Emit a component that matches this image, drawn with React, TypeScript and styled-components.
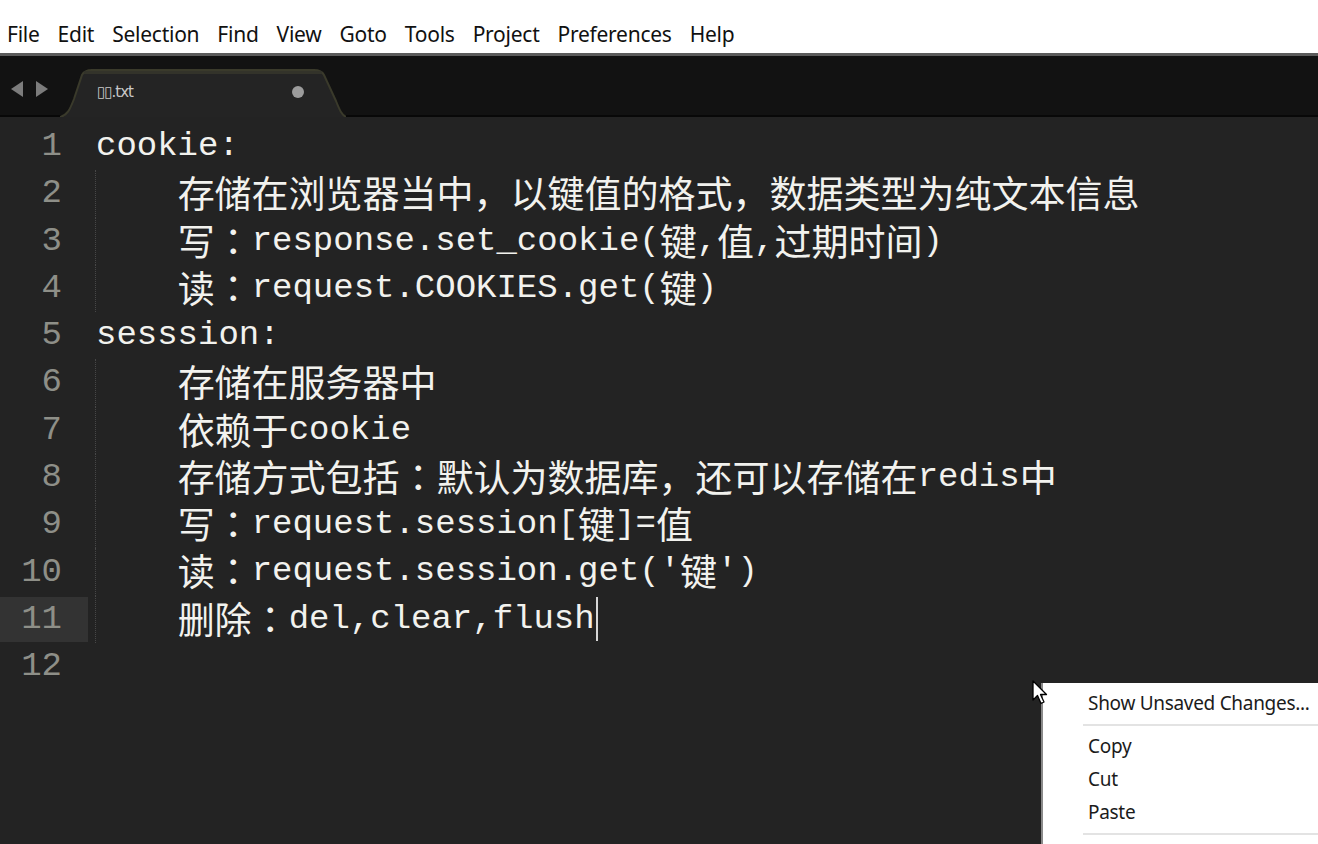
import React from 'react';
import styled, { createGlobalStyle } from 'styled-components';

const GlobalStyle = createGlobalStyle`
    html, body {
        margin: 0;
        padding: 0;
        background: #232323;
        overflow: hidden;
    }
`;

const Window = styled.div`
    width: 1318px;
    height: 844px;
    display: flex;
    flex-direction: column;
    overflow: hidden;
`;

const MenuBar = styled.div`
    height: 53px;
    box-sizing: border-box;
    background: #ffffff;
    display: flex;
    gap: 18px;
    padding: 20px 0 0 7px;
    font-family: "Noto Sans", "Open Sans", sans-serif;
    font-size: 21px;
    line-height: 28px;
    color: #111;
`;

const MenuItem = styled.span`
    letter-spacing: -0.25px;
`;

const TabBar = styled.div`
    height: 64px;
    box-sizing: border-box;
    background: #121212;
    border-top: 3px solid #5b5b5b;
    border-bottom: 2px solid #080808;
    display: flex;
    align-items: flex-end;
`;

const Nav = styled.div`
    align-self: center;
    display: flex;
    gap: 13px;
    padding: 0 0 0 11px;
    width: 49px;
    margin-top: 6px;
`;

const Tab = styled.div`
    position: relative;
    width: 286px;
    height: 48px;
    display: flex;
    align-items: center;
    box-sizing: border-box;
    padding: 0 0 2px 37px;
    margin-bottom: -2px;
`;

const TabShape = styled.svg`
    position: absolute;
    inset: 0;
`;

const TabLabel = styled.span`
    position: relative;
    font-family: "DejaVu Sans", sans-serif;
    font-size: 15px;
    color: #c8c8c8;
    letter-spacing: -1px;
    flex: 1;
`;

const DirtyDot = styled.span`
    position: relative;
    width: 12px;
    height: 12px;
    border-radius: 50%;
    background: #9c9c9c;
    margin-right: 42px;
`;

const Editor = styled.div`
    position: relative;
    flex: 1;
    background: #232323;
    padding-top: 6px;
`;

const Row = styled.div`
    display: flex;
    height: 47.27px;
    align-items: center;
`;

const Gutter = styled.div<{ $active?: boolean }>`
    width: 88px;
    height: 45px;
    box-sizing: border-box;
    padding-right: 26px;
    text-align: right;
    background: ${p => (p.$active ? '#333333' : 'transparent')};
    color: #8e8f88;
    font-family: "Liberation Mono", "DejaVu Sans Mono", monospace;
    font-size: 34px;
    line-height: 45px;
`;

const Code = styled.div<{ $guide?: boolean }>`
    position: relative;
    height: 100%;
    padding-left: 8px;
    white-space: pre;
    color: #f2f2ee;
    font-family: "Liberation Mono", "DejaVu Sans Mono", monospace;
    font-size: 34px;
    line-height: 47px;

    &::before {
        content: '';
        display: ${p => (p.$guide ? 'block' : 'none')};
        position: absolute;
        left: 7px;
        top: 0;
        bottom: 0;
        border-left: 1px dotted #474747;
    }
`;

const Cjk = styled.span<{ $centered?: boolean }>`
    position: relative;
    top: 6px;
    font-family: ${p => (p.$centered ? '"Noto Sans CJK JP"' : '"Noto Sans CJK SC"')}, sans-serif;
    font-size: 37px;
    line-height: 0;
`;

const Caret = styled.span`
    display: inline-block;
    width: 2px;
    height: 44px;
    margin-left: 1px;
    vertical-align: middle;
    background: #d6d6d6;
`;

const ContextMenu = styled.div`
    position: absolute;
    left: 1041px;
    top: 566px;
    width: 320px;
    height: 300px;
    background: #ffffff;
    border-left: 2px solid #8a8a8a;
    padding-top: 4px;
    font-family: "Noto Sans", "Open Sans", sans-serif;
    font-size: 19px;
    color: #1b1b1b;
`;

const MenuEntry = styled.div`
    height: 33px;
    line-height: 33px;
    padding-left: 45px;
    white-space: nowrap;
    letter-spacing: -0.3px;
`;

const MenuSeparator = styled.div`
    height: 2px;
    margin: 4px 0 4px 40px;
    background: #e3e3e3;
`;

const Pointer = styled.svg`
    position: absolute;
    left: 1032px;
    top: 563px;
`;

const lines: string[] = [
    'cookie:',
    '    存储在浏览器当中，以键值的格式，数据类型为纯文本信息',
    '    写：response.set_cookie(键,值,过期时间)',
    '    读：request.COOKIES.get(键)',
    'sesssion:',
    '    存储在服务器中',
    '    依赖于cookie',
    '    存储方式包括：默认为数据库，还可以存储在redis中',
    '    写：request.session[键]=值',
    "    读：request.session.get('键')",
    '    删除：del,clear,flush',
    '',
];

const menus = ['File', 'Edit', 'Selection', 'Find', 'View', 'Goto', 'Tools', 'Project', 'Preferences', 'Help'];

const cjkRun = /([\u3000-\u303f\u4e00-\u9fff\uff00-\uffef]+)/;
const colonRun = /(：)/;

// CJK runs get the wider CJK face; the full-width colon uses the JP face, where it sits centred
const renderText = (text: string) =>
    text.split(cjkRun).map((part, i) => {
        if (i % 2 === 0) {
            return <span key={ i }>{ part }</span>;
        }
        return part.split(colonRun).filter(Boolean).map((bit, j) => (
            <Cjk key={ `${i}-${j}` } $centered={ bit === '：' }>{ bit }</Cjk>
        ));
    });

const App = () => {
    const activeLine = 11;

    return (
        <Window>
            <GlobalStyle />
            <MenuBar>
                { menus.map(m => <MenuItem key={ m }>{ m }</MenuItem>) }
            </MenuBar>
            <TabBar>
                <Nav>
                    <svg width="12" height="16" viewBox="0 0 12 16">
                        <path d="M12 0 L0 8 L12 16 Z" fill="#7c7c7c" />
                    </svg>
                    <svg width="12" height="16" viewBox="0 0 12 16">
                        <path d="M0 0 L12 8 L0 16 Z" fill="#7c7c7c" />
                    </svg>
                </Nav>
                <Tab>
                    <TabShape width="286" height="48" viewBox="0 0 286 48">
                        <path
                            d="M0 48 C8 46 10 40 14 30 L22 6 C24 2 27 1 32 1 L254 1 C259 1 262 2 264 6 L276 32 C280 42 282 46 286 48 Z"
                            fill="#242424"
                        />
                        <path
                            d="M0 48 C8 46 10 40 14 30 L22 6 C24 2 27 1 32 1 L254 1 C259 1 262 2 264 6 L276 32 C280 42 282 46 286 48"
                            fill="none"
                            stroke="#3a3a2b"
                            strokeWidth="2"
                        />
                        <rect x="24" y="2" width="238" height="3" fill="#33332a" />
                    </TabShape>
                    <TabLabel>▯▯.txt</TabLabel>
                    <DirtyDot />
                </Tab>
            </TabBar>
            <Editor>
                { lines.map((text, idx) => {
                    const n = idx + 1;
                    return (
                        <Row key={ n }>
                            <Gutter $active={ n === activeLine }>{ n }</Gutter>
                            <Code $guide={ text.startsWith('    ') }>
                                { renderText(text) }
                                { n === activeLine && <Caret /> }
                            </Code>
                        </Row>
                    );
                }) }
                <ContextMenu>
                    <MenuEntry>Show Unsaved Changes...</MenuEntry>
                    <MenuSeparator />
                    <MenuEntry>Copy</MenuEntry>
                    <MenuEntry>Cut</MenuEntry>
                    <MenuEntry>Paste</MenuEntry>
                    <MenuSeparator />
                </ContextMenu>
                <Pointer width="18" height="26" viewBox="0 0 18 26">
                    <path
                        d="M1 1 L1 20 L5.5 15.5 L9 23.5 L12 22 L8.5 14.5 L14.5 14.5 Z"
                        fill="#ffffff"
                        stroke="#000000"
                        strokeWidth="1.3"
                        strokeLinejoin="round"
                    />
                </Pointer>
            </Editor>
        </Window>
    );
};

export default App;
